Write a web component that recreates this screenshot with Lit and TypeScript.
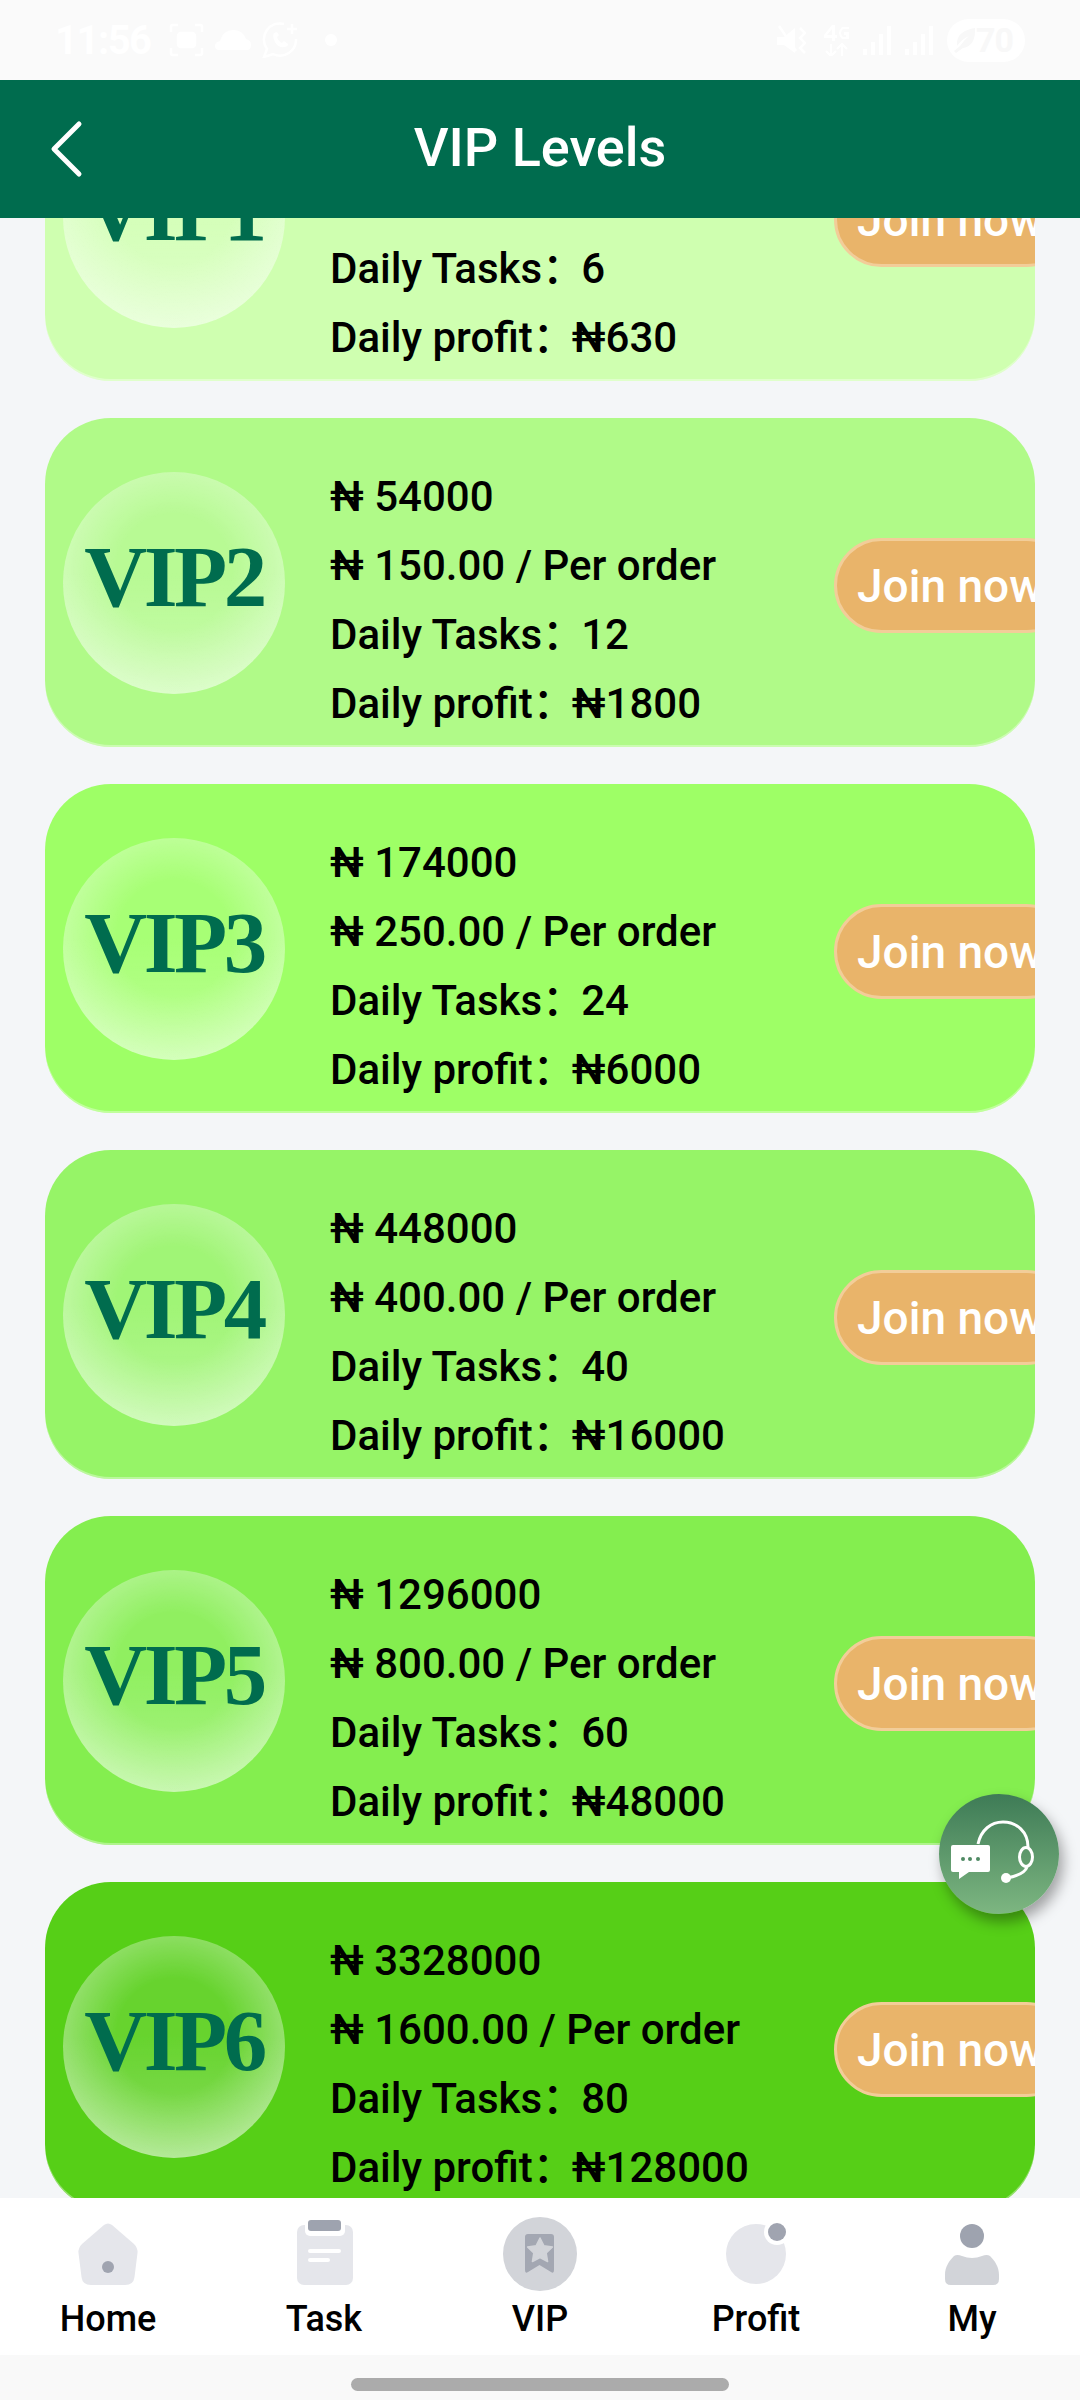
import { LitElement, css, html, svg } from 'lit';
import { customElement } from 'lit/decorators.js';

interface Level {
  name: string;
  color: string;
  price: string;
  perOrder: string;
  tasks: number;
  profit: number;
}

const LEVELS: Level[] = [
  { name: 'VIP1', color: '#cfffb0', price: '18000', perOrder: '105.00', tasks: 6, profit: 630 },
  { name: 'VIP2', color: '#b0fa88', price: '54000', perOrder: '150.00', tasks: 12, profit: 1800 },
  { name: 'VIP3', color: '#9eff66', price: '174000', perOrder: '250.00', tasks: 24, profit: 6000 },
  { name: 'VIP4', color: '#96f467', price: '448000', perOrder: '400.00', tasks: 40, profit: 16000 },
  { name: 'VIP5', color: '#84ee4f', price: '1296000', perOrder: '800.00', tasks: 60, profit: 48000 },
  { name: 'VIP6', color: '#56cf17', price: '3328000', perOrder: '1600.00', tasks: 80, profit: 128000 },
];

// cx / dy line each drawing up inside the 134x74 icon box
const TABS = [
  {
    label: 'Home',
    cx: 30,
    dy: 6,
    icon: svg`<path d="M26 2Q30 -1 34 2L56 21Q60 25 59.500 30L56.500 54Q55.500 62 47 62H13Q4.500 62 3.500 54L.5 30Q0 25 4 21Z" fill="#e5e6eb"/><circle cx="30" cy="44" r="6" fill="#a0a4b0"/>`,
  },
  {
    label: 'Task',
    cx: 27,
    dy: 3,
    icon: svg`<rect y="5" width="56" height="60" rx="7" fill="#e5e6eb"/><rect x="8" y="-3" width="40" height="19" rx="5" fill="#fff"/><rect x="11" width="33" height="11" rx="3" fill="#9ea3af"/><rect x="11" y="29" width="33" height="4" rx="2" fill="#fff"/><rect x="11" y="38" width="22" height="4" rx="2" fill="#fff"/>`,
  },
  {
    label: 'VIP',
    cx: 37,
    dy: 0,
    icon: svg`<circle cx="37" cy="37" r="37" fill="#d2d4d9"/><path d="M22 20Q22 17 25 17H48Q51 17 51 20V53Q51 57 48 55L36.500 48 25 55Q22 57 22 53Z" fill="#a3a7b2"/><path d="M37 21L40.800 28.700 49.400 30 43.200 36 44.600 44.500 37 40.500 29.400 44.500 30.800 36 24.600 30 33.200 28.700Z" fill="#d2d4d9" stroke="#d2d4d9" stroke-width="1.500" stroke-linejoin="round"/>`,
  },
  {
    label: 'Profit',
    cx: 30,
    dy: 6,
    icon: svg`<circle cx="30" cy="31" r="30" fill="#e5e6eb"/><circle cx="51" cy="9" r="13" fill="#fff"/><circle cx="51" cy="9" r="9" fill="#a0a4b0"/>`,
  },
  {
    label: 'My',
    cx: 27,
    dy: 6,
    icon: svg`<circle cx="27" cy="13" r="12" fill="#9ea3af"/><path d="M0 52C0 44 4 38 9 33Q12 31 17 33Q27 37 37 33Q42 31 45 33C50 38 54 44 54 52V56Q54 62 48 62H6Q0 62 0 56Z" fill="#d2d4d9"/>`,
  },
];

@customElement('app-root')
export class AppRoot extends LitElement {
  static styles = css`
    :host {
      display: flex;
      flex-direction: column;
      width: 1080px;
      height: 2400px;
      overflow: hidden;
      position: relative;
      background: #f4f6f8;
      font-family: Roboto, 'Noto Sans CJK SC', sans-serif;
      color: #000;
    }

    .status {
      flex: none;
      height: 80px;
      padding: 0 55px;
      box-sizing: border-box;
      background: #fafafa;
      display: flex;
      align-items: center;
      justify-content: space-between;
      color: #fff;
    }

    .status-left,
    .status-right {
      display: flex;
      align-items: center;
    }

    .status-left {
      gap: 11px;
    }

    .status-right {
      gap: 14px;
    }

    .time {
      width: 95px;
      margin-right: 8px;
      font-size: 40px;
      font-weight: 700;
      letter-spacing: -1.5px;
      white-space: nowrap;
    }

    .status-dot {
      margin-left: 16px;
    }

    .mute {
      margin-right: 4px;
    }

    .battery {
      display: flex;
      align-items: center;
      justify-content: space-between;
      width: 78px;
      height: 43px;
      border-radius: 22px;
      background: #fff;
      color: #f8f8f8;
      font-size: 34px;
      font-weight: 700;
      line-height: 43px;
      padding: 0 12px 0 7px;
      box-sizing: border-box;
      letter-spacing: -1px;
    }

    .header {
      flex: none;
      height: 138px;
      padding-bottom: 3px;
      box-sizing: border-box;
      background: #006c4e;
      display: flex;
      align-items: center;
      justify-content: center;
      position: relative;
      z-index: 1;
      color: #fff;
      font-size: 54px;
      font-weight: 500;
    }

    .back {
      position: absolute;
      left: 48px;
      top: 40px;
    }

    .scroller {
      flex: 1;
      min-height: 0;
      overflow: hidden;
    }

    .list {
      display: flex;
      flex-direction: column;
      gap: 37px;
      margin-top: -166px;
      padding: 0 45px;
    }

    .card {
      height: 329px;
      border-radius: 66px;
      overflow: hidden;
      display: flex;
      align-items: center;
      padding-left: 18px;
      box-shadow: inset 0 -2px 0 rgba(255, 255, 255, 0.35);
    }

    .badge {
      flex: none;
      width: 222px;
      height: 222px;
      border-radius: 50%;
      background:
        linear-gradient(rgba(255, 255, 255, 0) 45%, rgba(255, 255, 255, 0.22) 100%),
        radial-gradient(
          circle at 50% 45%,
          rgba(255, 255, 255, 0.1) 35%,
          rgba(255, 255, 255, 0.42) 72%,
          rgba(255, 255, 255, 0.76) 100%
        );
      display: flex;
      align-items: center;
      justify-content: center;
      padding-bottom: 12px;
      box-sizing: border-box;
      color: #006c4e;
      font-family: 'Liberation Serif', 'Times New Roman', serif;
      font-weight: 700;
      font-size: 87px;
      letter-spacing: -3.5px;
      line-height: 1;
    }

    .badge span {
      filter: blur(0.6px);
    }

    .info {
      flex: 1;
      min-width: 0;
      margin: 34px 0 0 45px;
      font-size: 42px;
      font-weight: 500;
      line-height: 69px;
      white-space: nowrap;
    }

    .colon {
      margin-right: -3px;
    }

    .join {
      flex: none;
      width: 240px;
      height: 95px;
      margin: 6px -39px 0 0;
      box-sizing: border-box;
      border: 3px solid #f2cd99;
      border-radius: 48px;
      background: #e9b46a;
      color: #fff;
      font: 500 46px Roboto, sans-serif;
      text-align: left;
      padding: 0 0 0 20px;
      white-space: nowrap;
    }

    .tabbar {
      flex: none;
      height: 157px;
      background: #fff;
      display: grid;
      grid-template-columns: repeat(5, 1fr);
      position: relative;
      z-index: 1;
    }

    .tab {
      display: flex;
      flex-direction: column;
      align-items: center;
      font-size: 36px;
      font-weight: 500;
    }

    .tab-icon {
      height: 74px;
      margin-top: 19px;
      overflow: visible;
      display: block;
    }

    .tab span {
      margin-top: 8px;
      line-height: 41px;
    }

    .gesture {
      flex: none;
      height: 45px;
      background: #f9f9f9;
      display: flex;
      justify-content: center;
      padding-top: 23px;
      box-sizing: border-box;
    }

    .gesture div {
      width: 378px;
      height: 13px;
      border-radius: 7px;
      background: #ababab;
    }

    .support {
      position: absolute;
      left: 939px;
      top: 1794px;
      z-index: 2;
      width: 120px;
      height: 120px;
      border-radius: 50%;
      background: linear-gradient(#3e7b56, #7db681);
      box-shadow: 4px 8px 14px rgba(0, 0, 0, 0.35);
    }
  `;

  private renderCard(level: Level) {
    return html`
      <div class="card" style="background:${level.color}">
        <div class="badge"><span>${level.name}</span></div>
        <div class="info">
          <div>₦ ${level.price}</div>
          <div>₦ ${level.perOrder} / Per order</div>
          <div>Daily Tasks<span class="colon">：</span>${level.tasks}</div>
          <div>Daily profit<span class="colon">：</span>₦${level.profit}</div>
        </div>
        <button class="join">Join now</button>
      </div>
    `;
  }

  private renderStatus() {
    return html`
      <div class="status">
        <div class="status-left">
          <span class="time">11:56</span>
          <svg width="35" height="34" viewBox="0 0 35 34" fill="none" stroke="#fff" stroke-width="2.500">
            <path d="M2 9V4Q2 2 4 2H9M26 2H31Q33 2 33 4V9M33 25V30Q33 32 31 32H26M9 32H4Q2 32 2 30V25" />
            <rect x="9" y="10" width="17" height="14" rx="3" fill="#fff" />
          </svg>
          <svg width="36" height="20" viewBox="0 0 36 20" fill="#fff">
            <path d="M4 20Q0 20 0 16T5 11Q8 0 18 0T31 9Q36 10 36 15T32 20Z" />
          </svg>
          <svg width="36" height="36" viewBox="0 0 36 36" fill="none" stroke="#fff" stroke-width="2.500">
            <path d="M22 2A16 16 0 0 0 5 27L2 35 11 32A16 16 0 0 0 34 17" />
            <path d="M12 11Q10 14 13 20T22 25Q26 25 26 22L22 19 20 21Q16 19 15 15L17 13 15 10Z" fill="#fff" stroke="none" />
            <path d="M30 2V12M25 7H35" />
          </svg>
          <svg class="status-dot" width="12" height="12" viewBox="0 0 12 12">
            <circle cx="6" cy="6" r="6" fill="#fff" />
          </svg>
        </div>
        <div class="status-right">
          <svg class="mute" width="29" height="31" viewBox="0 0 29 31" fill="#fff">
            <path d="M0 12H7L18 3V28L7 20H0Z" />
            <path d="M2 1L19 26M23 3L28 8 23 13 28 18 23 23 28 28" fill="none" stroke="#fff" stroke-width="2.500" />
          </svg>
          <svg width="25" height="31" viewBox="0 0 25 31" fill="#fff">
            <path d="M0 10L8 0H11V10H13V13H11V16H8V13H0ZM3 10H8V4Z" />
            <path d="M25 2H18Q15 5 15 8T18 14H25V7H20V10H22V12H19Q17 10 17 8T19 4H25Z" />
            <path d="M7 19V31M2 26L7 31 12 26M18 31V19M13 24L18 19 23 24" fill="none" stroke="#fff" stroke-width="2" />
          </svg>
          <svg width="28" height="29" viewBox="0 0 28 29" fill="#fff">
            <path d="M0 23H4V29H0ZM8 16H12V29H8ZM16 8H20V29H16ZM24 0H28V29H24Z" />
          </svg>
          <svg width="28" height="29" viewBox="0 0 28 29" fill="#fff">
            <path d="M0 23H4V29H0ZM8 16H12V29H8ZM16 8H20V29H16ZM24 0H28V29H24Z" />
          </svg>
          <div class="battery">
            <svg width="22" height="26" viewBox="0 0 22 26" fill="#f8f8f8">
              <path d="M3 15Q4 4 21 1Q22 19 9 21L2 26 0 24 6 19Q10 13 15 9Q8 12 3 19Z" />
            </svg>
            <span>70</span>
          </div>
        </div>
      </div>
    `;
  }

  render() {
    return html`
      ${this.renderStatus()}

      <header class="header">
        <svg class="back" width="36" height="58" viewBox="0 0 36 58" fill="none" stroke="#fff" stroke-width="5" stroke-linecap="round" stroke-linejoin="round">
          <path d="M31 4L6 29 31 54" />
        </svg>
        VIP Levels
      </header>

      <div class="scroller">
        <div class="list">${LEVELS.map((level) => this.renderCard(level))}</div>
      </div>

      <nav class="tabbar">
        ${TABS.map(
          (tab) => html`
            <div class="tab">
              <svg class="tab-icon" viewBox="${tab.cx - 67} ${-tab.dy} 134 74" width="134">${tab.icon}</svg>
              <span>${tab.label}</span>
            </div>
          `,
        )}
      </nav>

      <div class="gesture"><div></div></div>

      <div class="support">
        <svg width="120" height="120" viewBox="0 0 120 120" fill="none">
          <path d="M39 50C42 36 52 28 64 28C78 28 89 38 89 53" stroke="#fff" stroke-width="3" />
          <ellipse cx="87" cy="63" rx="6.500" ry="9.500" stroke="#fff" stroke-width="3" />
          <path d="M88 73C86 79 78 82 68 84" stroke="#fff" stroke-width="3" />
          <circle cx="67" cy="84" r="5" fill="#fff" />
          <path d="M12 53Q12 51 14 51H49Q51 51 51 53V76Q51 78 49 78H30L20 85V78H14Q12 78 12 76Z" fill="#fff" />
          <circle cx="24" cy="65" r="2" fill="#4f8a63" />
          <circle cx="31" cy="65" r="2" fill="#4f8a63" />
          <circle cx="39" cy="65" r="2" fill="#4f8a63" />
        </svg>
      </div>
    `;
  }
}
